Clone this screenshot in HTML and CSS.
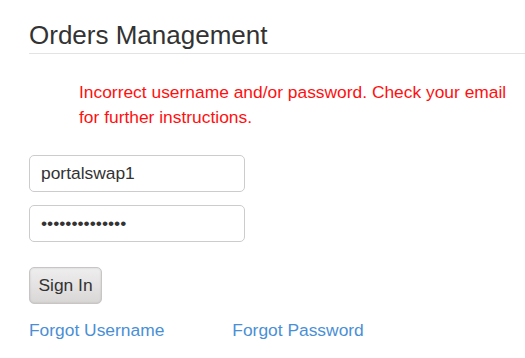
FILE: index.html
```html
<!DOCTYPE html>
<html>
<head>
<meta charset="utf-8">
<link rel="stylesheet" href="styles.css">
</head>
<body>
<div class="page">
  <h1 class="title">Orders Management</h1>
  <p class="error">Incorrect username and/or password. Check your email for further instructions.</p>
  <form class="form">
    <input class="field" type="text" value="portalswap1">
    <input class="field" type="password" value="portalswap1234">
    <button class="btn" type="button">Sign In</button>
    <div class="links">
      <a class="link" href="#">Forgot Username</a>
      <a class="link" href="#">Forgot Password</a>
    </div>
  </form>
</div>
</body>
</html>
```

FILE: styles.css
```css
html, body {
  margin: 0;
  padding: 0;
  background: #fff;
}
body {
  font-family: "Liberation Sans", Arial, sans-serif;
  color: #333;
}
.page {
  padding: 20px 0 0 29px;
}
.title {
  margin: 0;
  font-size: 26px;
  font-weight: normal;
  line-height: 30px;
  color: #333;
  padding-bottom: 3px;
  border-bottom: 1px solid #e3e3e3;
}
.error {
  margin: 26px 0 0 50px;
  width: 445px;
  color: #ff1010;
  font-size: 17.4px;
  line-height: 25px;
}
.form {
  display: flex;
  flex-direction: column;
  align-items: flex-start;
  margin-top: 25px;
}
.field {
  box-sizing: border-box;
  width: 216px;
  height: 37px;
  margin: 0 0 13px 0;
  padding: 0 11px;
  border: 1px solid #ccc;
  border-radius: 5px;
  font-family: "Liberation Sans", Arial, sans-serif;
  font-size: 17.4px;
  color: #333;
  background: #fff;
  outline: none;
}
.btn {
  margin-top: 12px;
  box-sizing: border-box;
  width: 73px;
  height: 37px;
  border: 1px solid #c9c5c5;
  border-radius: 5px;
  background: linear-gradient(#efeeee, #d9d6d6);
  box-shadow: inset 0 0 2px rgba(0,0,0,0.15);
  font-family: "Liberation Sans", Arial, sans-serif;
  font-size: 17.4px;
  color: #333;
  padding: 0;
}
.links {
  display: flex;
  margin-top: 15px;
}
.link {
  font-size: 17.4px;
  line-height: 22px;
  color: #4a8fd6;
  text-decoration: none;
}
.link + .link {
  margin-left: 68px;
}
```
